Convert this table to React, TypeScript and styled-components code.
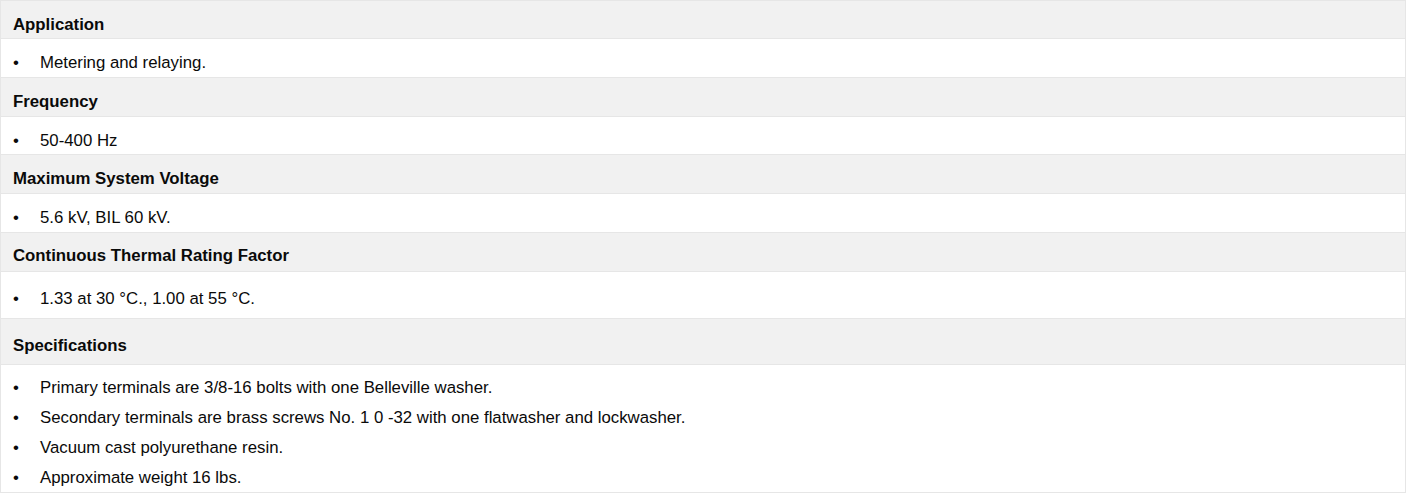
import styled, { createGlobalStyle } from 'styled-components';

const GlobalStyle = createGlobalStyle`
  body {
    margin: 0;
    background: #ffffff;
    font-family: "Liberation Sans", Arial, sans-serif;
    color: #0a0a0a;
  }
`;

const Table = styled.div`
  width: 1406px;
  display: flex;
  flex-direction: column;
  border: 1px solid #e6e6e6;
  border-bottom: none;
  box-sizing: border-box;
`;

const HeadRow = styled.div<{ $height: number; $pad: number }>`
  height: ${({ $height }) => $height}px;
  box-sizing: border-box;
  padding: ${({ $pad }) => $pad}px 12px 0;
  background: #f1f1f1;
  border-bottom: 1px solid #e6e6e6;
  font-size: 16.8px;
  line-height: 20px;
  font-weight: 700;
`;

const BodyRow = styled.div<{ $height: number; $pad: number }>`
  height: ${({ $height }) => $height}px;
  box-sizing: border-box;
  padding: ${({ $pad }) => $pad}px 0 0;
  background: #ffffff;
  border-bottom: 1px solid #e6e6e6;
`;

const List = styled.ul`
  margin: 0;
  padding: 0;
  list-style: none;
  display: flex;
  flex-direction: column;
  gap: 10px;
`;

const Item = styled.li`
  display: flex;
  font-size: 16.8px;
  line-height: 20px;

  &::before {
    content: '•';
    width: 39px;
    padding-left: 12px;
    box-sizing: border-box;
    flex-shrink: 0;
  }
`;

type Section = {
  title: string;
  items: string[];
  headHeight: number;
  headPad: number;
  bodyHeight: number;
  bodyPad: number;
};

const sections: Section[] = [
  { title: 'Application', items: ['Metering and relaying.'], headHeight: 38, headPad: 14, bodyHeight: 39, bodyPad: 14 },
  { title: 'Frequency', items: ['50-400 Hz'], headHeight: 39, headPad: 14, bodyHeight: 38, bodyPad: 14 },
  { title: 'Maximum System Voltage', items: ['5.6 kV, BIL 60 kV.'], headHeight: 39, headPad: 14, bodyHeight: 39, bodyPad: 14 },
  {
    title: 'Continuous Thermal Rating Factor',
    items: ['1.33 at 30 °C., 1.00 at 55 °C.'],
    headHeight: 39,
    headPad: 13,
    bodyHeight: 47,
    bodyPad: 17,
  },
  {
    title: 'Specifications',
    items: [
      'Primary terminals are 3/8-16 bolts with one Belleville washer.',
      'Secondary terminals are brass screws No. 1 0 -32 with one flatwasher and lockwasher.',
      'Vacuum cast polyurethane resin.',
      'Approximate weight 16 lbs.',
    ],
    headHeight: 46,
    headPad: 17,
    bodyHeight: 128,
    bodyPad: 13,
  },
];

export default function App() {
  return (
    <>
      <GlobalStyle />
      <Table>
        {sections.map((s) => (
          <div key={s.title}>
            <HeadRow $height={s.headHeight} $pad={s.headPad}>
              {s.title}
            </HeadRow>
            <BodyRow $height={s.bodyHeight} $pad={s.bodyPad}>
              <List>
                {s.items.map((it) => (
                  <Item key={it}>{it}</Item>
                ))}
              </List>
            </BodyRow>
          </div>
        ))}
      </Table>
    </>
  );
}
